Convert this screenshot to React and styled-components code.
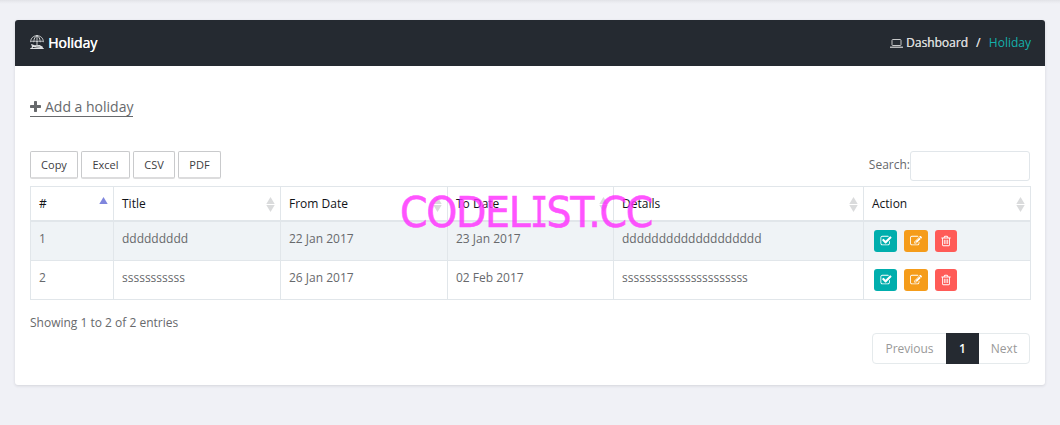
import React from "react";
import styled, { createGlobalStyle } from "styled-components";

const Global = createGlobalStyle`
  * { box-sizing: border-box; }
  body {
    margin: 0;
    background: #f0f1f6;
    color: #67696c;
    font: 12px/18px "Open Sans", sans-serif;
  }
`;

const Page = styled.div`
  position: relative;
  height: 425px;
  overflow: hidden;
  padding: 20px 15px 0;
  background: linear-gradient(#e1e2e7, #eaebf0 2px, #f0f1f6 4px);
`;

const Card = styled.section`
  height: 365px;
  border-radius: 3px;
  background: #fff;
  box-shadow: 0 1px 3px rgba(40, 45, 60, 0.14);
`;

const CardHeader = styled.header`
  display: flex;
  align-items: center;
  justify-content: space-between;
  height: 46px;
  padding: 0 14px 0 15px;
  border-radius: 3px 3px 0 0;
  background: #252a31;
`;

const Title = styled.h1`
  display: flex;
  align-items: center;
  gap: 4px;
  margin: 0;
  color: #fff;
  font-size: 14px;
  font-weight: 400;
  text-shadow: 0.4px 0 0 #fff;
  svg { color: #dfe1e2; position: relative; top: -1px; }
`;

const Crumbs = styled.nav`
  display: flex;
  align-items: center;
  color: #d9d9d9;
  text-shadow: 0.3px 0 0 currentColor;
  svg { margin-right: 3px; }
`;

const Slash = styled.span`
  margin: 0 8.5px 0 8px;
`;

const Current = styled.span`
  color: #14b1ac;
  text-shadow: none;
`;

const Body = styled.div`
  padding: 31px 15px 0;
`;

const AddLink = styled.a`
  display: inline-flex;
  align-items: center;
  gap: 4px;
  height: 20px;
  border-bottom: 1px solid #67696c;
  color: #67696c;
  font-size: 14px;
`;

const Toolbar = styled.div`
  display: flex;
  justify-content: space-between;
  height: 35px;
  margin-top: 34px;
`;

const ButtonGroup = styled.div`
  display: flex;
  gap: 3px;
`;

const ExportButton = styled.button`
  width: ${(p) => p.$width}px;
  height: 28px;
  padding: 0;
  border: 1px solid #c9cacc;
  border-bottom: 2px solid #dcdcdd;
  border-radius: 2px;
  background: #fff;
  color: #3d3d3f;
  font: 11px "Open Sans", sans-serif;
`;

const SearchLabel = styled.label`
  display: flex;
  line-height: 27px;
`;

const SearchInput = styled.input`
  width: 120px;
  height: 30px;
  border: 1px solid #e1e6ea;
  border-radius: 3px;
  background: #fff;
`;

const Table = styled.table`
  width: 1001px;
  table-layout: fixed;
  border-collapse: separate;
  border-spacing: 0;
  border-top: 1px solid #e1e6ea;
  border-left: 1px solid #e1e6ea;
`;

const HeadCell = styled.th`
  height: 35px;
  padding: 1px 5px 0 8px;
  border-right: 1px solid #e1e6ea;
  border-bottom: 2px solid #e1e6ea;
  color: #111318;
  font-weight: 400;
  text-align: left;
`;

const HeadContent = styled.div`
  display: flex;
  align-items: center;
  justify-content: space-between;
`;

const Row = styled.tr`
  background: ${(p) => (p.$striped ? "#eff3f6" : "#fff")};
`;

const Cell = styled.td`
  height: 39px;
  padding: 8px 8px 0;
  border-right: 1px solid #e1e6ea;
  border-bottom: 1px solid #e1e6ea;
  vertical-align: top;
`;

const Actions = styled.div`
  display: flex;
  gap: 7px;
  padding-left: 2px;
`;

const ActionButton = styled.button`
  display: flex;
  align-items: center;
  justify-content: center;
  width: ${(p) => p.$width}px;
  height: 22px;
  padding: 0;
  border: 0;
  border-radius: 3px;
  background: ${(p) => p.$color};
  color: #fff;
`;

const Info = styled.div`
  margin-top: 14px;
`;

const Pager = styled.div`
  display: flex;
  width: 158px;
  height: 31px;
  margin: 1px 0 0 auto;
  border: 1px solid #e5eaec;
  border-radius: 4px;
  color: #999;
`;

const PageItem = styled.span`
  width: ${(p) => p.$width}px;
  line-height: 29px;
  text-align: center;
`;

const ActivePage = styled(PageItem)`
  margin: -1px 0;
  line-height: 31px;
  background: #252a31;
  color: #fff;
  font-weight: 600;
`;

const Watermark = styled.div`
  position: absolute;
  left: 400px;
  top: 188px;
  color: #ff2fff;
  opacity: 0.82;
  font: 42.5px/50px "DejaVu Sans", sans-serif;
  letter-spacing: -1.45px;
  transform: scaleX(0.93);
  transform-origin: 0 0;
  -webkit-text-stroke: 0.6px;
  white-space: nowrap;
  pointer-events: none;
`;

const SerifI = styled.span`
  display: inline-block;
  margin: 0 -4px 0 -1.8px;
  font-family: "DejaVu Sans Mono", monospace;
  transform: scaleX(0.75);
`;

const glyphs = {
  check: "M1472 930v318q0 119-84.5 203.5t-203.5 84.5h-832q-119 0-203.5-84.5t-84.5-203.5v-832q0-119 84.5-203.5t203.5-84.5h832q63 0 117 25 15 7 18 23 3 17-9 29l-49 49q-10 10-23 10-3 0-9-2-23-6-45-6h-832q-66 0-113 47t-47 113v832q0 66 47 113t113 47h832q66 0 113-47t47-113v-254q0-13 9-22l64-64q10-10 23-10 6 0 12 3 20 8 20 29zm231-489l-814 814q-24 24-57 24t-57-24l-430-430q-24-24-24-57t24-57l110-110q24-24 57-24t57 24l263 263 647-647q24-24 57-24t57 24l110 110q24 24 24 57t-24 57z",
  edit: "M888 1184l116-116-152-152-116 116v56h96v96h56zm440-720q-16-16-33 1l-350 350q-17 17-1 33t33-1l350-350q17-17 1-33zm80 594v190q0 119-84.5 203.5t-203.5 84.5h-832q-119 0-203.5-84.5t-84.5-203.5v-832q0-119 84.5-203.5t203.5-84.5h832q63 0 117 25 15 7 18 23 3 17-9 29l-49 49q-14 14-32 8-23-6-45-6h-832q-66 0-113 47t-47 113v832q0 66 47 113t113 47h832q66 0 113-47t47-113v-126q0-13 9-22l64-64q15-15 35-7t20 29zm-96-738l288 288-672 672h-288v-288zm444 132l-92 92-288-288 92-92q28-28 68-28t68 28l152 152q28 28 28 68t-28 68z",
  trash: "M704 736v576q0 14-9 23t-23 9h-64q-14 0-23-9t-9-23v-576q0-14 9-23t23-9h64q14 0 23 9t9 23zm256 0v576q0 14-9 23t-23 9h-64q-14 0-23-9t-9-23v-576q0-14 9-23t23-9h64q14 0 23 9t9 23zm256 0v576q0 14-9 23t-23 9h-64q-14 0-23-9t-9-23v-576q0-14 9-23t23-9h64q14 0 23 9t9 23zm128 724v-948h-896v948q0 22 7 40.5t14.5 27 10.5 8.5h832q3 0 10.5-8.5t14.5-27 7-40.5zm-672-1076h448l-48-117q-7-9-17-11h-317q-10 2-17 11zm928 32v64q0 14-9 23t-23 9h-96v948q0 83-47 143.5t-113 60.5h-832q-66 0-113-58.5t-47-141.5v-952h-96q-14 0-23-9t-9-23v-64q0-14 9-23t23-9h309l70-167q15-37 54-63t79-26h320q40 0 79 26t54 63l70 167h309q14 0 23 9t9 23z",
  plus: "M1600 736v192q0 40-28 68t-68 28h-416v416q0 40-28 68t-68 28h-192q-40 0-68-28t-28-68v-416h-416q-40 0-68-28t-28-68v-192q0-40 28-68t68-28h416v-416q0-40 28-68t68-28h192q40 0 68 28t28 68v416h416q40 0 68 28t28 68z",
};

const Glyph = ({ name, size = 12, box = "0 0 1792 1792" }) => (
  <svg width={size} height={size} viewBox={box} fill="currentColor">
    <path d={glyphs[name]} />
  </svg>
);

const BeachIcon = () => (
  <svg width="14" height="14" viewBox="0 0 14 14" fill="none" stroke="currentColor">
    <path d="M.6 6.8C.8 3 3.5.7 7 .7s6.2 2.3 6.4 6.1c-1-.8-2.2-.8-3.2 0-1-.8-2.2-.8-3.2 0-1-.8-2.2-.8-3.2 0-1-.8-2.2-.8-3.2 0zM3.8 6.6C4 3.7 5 1.6 7 .7c2 .9 3 3 3.2 5.9M7 0v10" strokeWidth=".9" />
    <path d="M.3 13.5h13.4M1.2 9.6l3.2 1.3 5.2-.2 3.2 1.8M2 11.2l4 .8 5 .3M2 13l.7-2M11.8 13.2l-.7-1.4" strokeWidth="1.2" />
  </svg>
);

const LaptopIcon = () => (
  <svg width="13" height="9" viewBox="0 0 13 9" fill="none" stroke="currentColor">
    <rect x="2" y=".5" width="9" height="6" rx=".8" strokeWidth=".9" />
    <path d="M0 8.2h13" strokeWidth="1.2" />
  </svg>
);

const SortIcon = ({ active }) => (
  <svg width="9" height="15" viewBox="0 0 9 15">
    <path d="M4.5 0l4.2 7H.3z" fill={active ? "#7f86dd" : "#dadbdc"} />
    {!active && <path d="M.3 8h8.4l-4.2 7z" fill="#dadbdc" />}
  </svg>
);

const columns = [
  ["#", 83],
  ["Title", 167],
  ["From Date", 167],
  ["To Date", 166],
  ["Details", 250],
  ["Action", 167],
];

const rows = [
  ["1", "ddddddddd", "22 Jan 2017", "23 Jan 2017", "ddddddddddddddddddd"],
  ["2", "sssssssssss", "26 Jan 2017", "02 Feb 2017", "ssssssssssssssssssssss"],
];

export default function App() {
  return (
    <Page>
      <Global />
      <Card>
        <CardHeader>
          <Title><BeachIcon />Holiday</Title>
          <Crumbs>
            <LaptopIcon />Dashboard<Slash>/</Slash><Current>Holiday</Current>
          </Crumbs>
        </CardHeader>
        <Body>
          <AddLink><Glyph name="plus" size={11} box="192 128 1408 1408" />Add a holiday</AddLink>
          <Toolbar>
            <ButtonGroup>
              <ExportButton $width={48}>Copy</ExportButton>
              <ExportButton $width={49}>Excel</ExportButton>
              <ExportButton $width={42}>CSV</ExportButton>
              <ExportButton $width={43}>PDF</ExportButton>
            </ButtonGroup>
            <SearchLabel>Search:<SearchInput /></SearchLabel>
          </Toolbar>
          <Table>
            <colgroup>
              {columns.map(([name, width]) => <col key={name} width={width} />)}
            </colgroup>
            <thead>
              <tr>
                {columns.map(([name], i) => (
                  <HeadCell key={name}>
                    <HeadContent>{name}<SortIcon active={i === 0} /></HeadContent>
                  </HeadCell>
                ))}
              </tr>
            </thead>
            <tbody>
              {rows.map((row, i) => (
                <Row key={row[0]} $striped={i === 0}>
                  {row.map((text, j) => <Cell key={j}>{text}</Cell>)}
                  <Cell>
                    <Actions>
                      <ActionButton $width={23} $color="#00aead"><Glyph name="check" /></ActionButton>
                      <ActionButton $width={24} $color="#f59c1a"><Glyph name="edit" /></ActionButton>
                      <ActionButton $width={22} $color="#ff5b57"><Glyph name="trash" /></ActionButton>
                    </Actions>
                  </Cell>
                </Row>
              ))}
            </tbody>
          </Table>
          <Info>Showing 1 to 2 of 2 entries</Info>
          <Pager>
            <PageItem $width={73}>Previous</PageItem>
            <ActivePage $width={33}>1</ActivePage>
            <PageItem $width={50}>Next</PageItem>
          </Pager>
        </Body>
      </Card>
      <Watermark>CODEL<SerifI>I</SerifI>ST.CC</Watermark>
    </Page>
  );
}
